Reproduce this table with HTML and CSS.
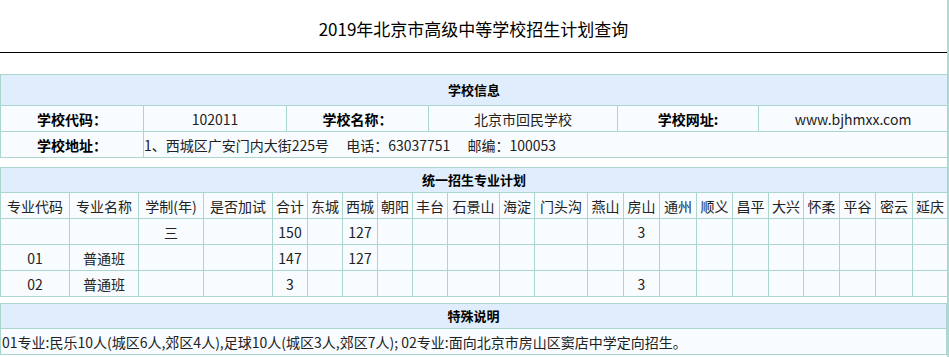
FILE: index.html
```html
<!DOCTYPE html>
<html lang="zh-CN">
<head>
<meta charset="utf-8">
<title>2019年北京市高级中等学校招生计划查询</title>
<link rel="stylesheet" href="styles.css">
</head>
<body>
<div class="page">
  <div class="title-bar">
    <h1 class="title">2019年北京市高级中等学校招生计划查询</h1>
  </div>

  <table class="grid info">
    <colgroup>
      <col class="w143"><col class="w143"><col class="w142"><col class="w189"><col class="w141"><col class="w189">
    </colgroup>
    <tr class="head head-tall"><th colspan="6">学校信息</th></tr>
    <tr class="row">
      <td class="label">学校代码：</td>
      <td>102011</td>
      <td class="label">学校名称：</td>
      <td>北京市回民学校</td>
      <td class="label">学校网址:</td>
      <td>www.bjhmxx.com</td>
    </tr>
    <tr class="row">
      <td class="label">学校地址：</td>
      <td colspan="5" class="left">1、西城区广安门内大街225号&emsp;&nbsp;电话：63037751&emsp;&nbsp;邮编：100053</td>
    </tr>
  </table>

  <table class="grid plan">
    <colgroup>
      <col class="w69"><col class="w69"><col class="w65"><col class="w69">
      <col class="w35"><col class="w35"><col class="w35"><col class="w35"><col class="w35">
      <col class="w52"><col class="w35"><col class="w53"><col class="w36"><col class="w36">
      <col class="w37"><col class="w36"><col class="w36"><col class="w35"><col class="w36">
      <col class="w36"><col class="w37"><col class="w35">
    </colgroup>
    <tr class="head"><th colspan="22">统一招生专业计划</th></tr>
    <tr class="row">
      <td>专业代码</td><td>专业名称</td><td>学制(年)</td><td>是否加试</td><td>合计</td><td>东城</td><td>西城</td><td>朝阳</td><td>丰台</td><td>石景山</td><td>海淀</td><td>门头沟</td><td>燕山</td><td>房山</td><td>通州</td><td>顺义</td><td>昌平</td><td>大兴</td><td>怀柔</td><td>平谷</td><td>密云</td><td>延庆</td>
    </tr>
    <tr class="row">
      <td></td><td></td><td>三</td><td></td><td>150</td><td></td><td>127</td><td></td><td></td><td></td><td></td><td></td><td></td><td>3</td><td></td><td></td><td></td><td></td><td></td><td></td><td></td><td></td>
    </tr>
    <tr class="row">
      <td>01</td><td>普通班</td><td></td><td></td><td>147</td><td></td><td>127</td><td></td><td></td><td></td><td></td><td></td><td></td><td></td><td></td><td></td><td></td><td></td><td></td><td></td><td></td><td></td>
    </tr>
    <tr class="row">
      <td>02</td><td>普通班</td><td></td><td></td><td>3</td><td></td><td></td><td></td><td></td><td></td><td></td><td></td><td></td><td>3</td><td></td><td></td><td></td><td></td><td></td><td></td><td></td><td></td>
    </tr>
  </table>

  <table class="grid notes">
    <tr class="head"><th>特殊说明</th></tr>
    <tr class="row"><td class="left">01专业:民乐10人(城区6人,郊区4人),足球10人(城区3人,郊区7人); 02专业:面向北京市房山区窦店中学定向招生。</td></tr>
  </table>
</div>
</body>
</html>
```

FILE: styles.css
```css
html, body {
  margin: 0;
  padding: 0;
  background: #ffffff;
}

body {
  font-family: "Noto Sans CJK SC", "Noto Sans", sans-serif;
  font-size: 14px;
  color: #222222;
}

.page {
  width: 947px;
  min-height: 357px;
  border-right: 2px solid #b1d9d3;
}

.title-bar {
  height: 52px;
  border-bottom: 1px solid #000000;
  display: flex;
  align-items: center;
  justify-content: center;
}

.title {
  margin: 4px 0 0 0;
  font-size: 17px;
  font-weight: normal;
  color: #000000;
  letter-spacing: 0;
}

.grid {
  width: 947px;
  border-collapse: collapse;
  table-layout: fixed;
  background: #f8fcff;
}

.grid td,
.grid th {
  border: 1px solid #abd6cf;
  padding: 0;
  text-align: center;
  white-space: nowrap;
  overflow: hidden;
  line-height: 20px;
}

.head th {
  background: #dfedfc;
  font-size: 13px;
  font-weight: bold;
  color: #000000;
  height: 24px;
}

.head-tall th {
  height: 30px;
}

.row td {
  height: 25px;
}

.label {
  font-weight: bold;
  color: #000000;
}

.left {
  text-align: left !important;
}

.notes .left {
  padding-left: 1px;
}

.info {
  margin-top: 21px;
}

.plan {
  margin-top: 9px;
}

.notes {
  margin-top: 6px;
}

.w143 { width: 143px; }
.w142 { width: 142px; }
.w141 { width: 141px; }
.w189 { width: 189px; }
.w69 { width: 69px; }
.w65 { width: 65px; }
.w53 { width: 53px; }
.w52 { width: 52px; }
.w37 { width: 37px; }
.w36 { width: 36px; }
.w35 { width: 35px; }
```
